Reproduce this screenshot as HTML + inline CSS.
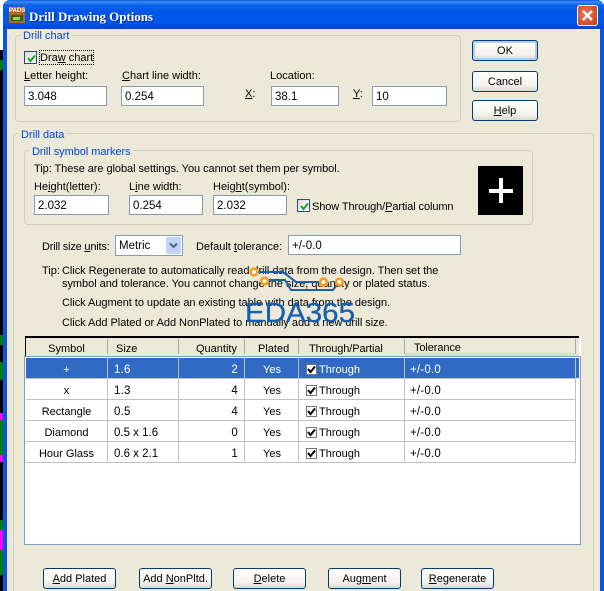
<!DOCTYPE html>
<html><head><meta charset="utf-8"><style>
html,body{margin:0;padding:0;background:#fff}
#r{position:relative;width:604px;height:591px;overflow:hidden;font:11px/13px "Liberation Sans",sans-serif;color:#000;background:#ece9d8}
#r div,#r span.t{position:absolute}
.t{white-space:nowrap}
.g{border:1px solid #d0d0bf;border-radius:4px;box-sizing:border-box}
.l{color:#0046d5;background:#ece9d8;padding:0 2px;white-space:nowrap}
.i{background:#fff;border:1px solid #7f9db9;box-sizing:border-box;height:20px;padding:4px 0 0 3px;font-size:11.5px;line-height:13px}
.b{border:1px solid #003c74;border-radius:3px;box-sizing:border-box;background:linear-gradient(#fff,#f4f3ee 70%,#dcd8c8);text-align:center;height:21px;line-height:21px;font-size:11px}
.c{background:linear-gradient(135deg,#dcdcd7,#fff);border:1px solid #1c5180;box-sizing:border-box;width:13px;height:13px}
.c svg{position:absolute;left:1px;top:1px}
.hl{background:#aca899;height:15px;width:1px;top:339px}
.h{top:343px;text-align:center;white-space:nowrap}
.v{background:#c0c0c0;width:1px;top:358px;height:105px}
.rl{background:#c0c0c0;height:1px;left:26px;width:550px}
.cell{white-space:nowrap;font-size:11px}
.n{letter-spacing:.2px;font-size:11.500px}
.tc{width:11px;height:11px;left:306px;border:1px solid #777;box-sizing:border-box;background:#fff}
.tc svg{position:absolute;left:0;top:0}
</style></head><body><div id="r">
<div style="left:0;top:0;width:604px;height:50px;background:#fff"></div>
<div style="left:0;top:50px;width:3px;height:541px;background:#000"></div>
<div style="left:0;top:60px;width:3px;height:10px;background:#008000"></div>
<div style="left:0;top:335px;width:3px;height:10px;background:#008000"></div>
<div style="left:0;top:362px;width:3px;height:18px;background:#008000"></div>
<div style="left:0;top:413px;width:3px;height:7px;background:#f0f"></div>
<div style="left:0;top:420px;width:3px;height:35px;background:#008000"></div>
<div style="left:0;top:455px;width:3px;height:7px;background:#f0f"></div>
<div style="left:0;top:520px;width:3px;height:10px;background:#008000"></div>
<div style="left:0;top:530px;width:3px;height:20px;background:#f0f"></div>
<div style="left:0;top:550px;width:3px;height:25px;background:#008000"></div>

<div style="left:3px;top:0;width:601px;height:591px;background:#0a55e0;border-radius:7px 7px 0 0"></div>
<div style="left:3px;top:0;width:601px;height:29px;border-radius:7px 7px 0 0;background:linear-gradient(#0a5be0 0,#3d8cf5 2px,#0a62e8 5px,#0055e5 12px,#0058ee 22px,#0048d0 28px)"></div>
<div style="left:7px;top:29px;width:593px;height:562px;background:#ece9d8"></div>

<div style="left:9px;top:7px;width:16px;height:16px;background:#b5651d"></div>
<div style="left:11px;top:15px;width:12px;height:6px;background:#2f5f1f"></div>
<div style="left:13px;top:17px;width:7px;height:3px;background:#9fd93a"></div>
<span class="t" style="left:9px;top:7px;width:16px;text-align:center;font:bold 6px/8px 'Liberation Sans',sans-serif;color:#fff">PADS</span>
<span class="t" style="left:29px;top:9px;font:bold 13px/15px 'Liberation Serif',serif;color:#fff;text-shadow:1px 1px 0 #0a2a90;letter-spacing:-.05px">Drill Drawing Options</span>
<div style="left:577px;top:5px;width:21px;height:21px;box-sizing:border-box;border:1px solid #fff;border-radius:3px;background:radial-gradient(circle at 40% 40%,#e8785a,#c83a18)"><svg width="19" height="19" style="position:absolute;left:0;top:0"><path d="M5 5L14 14M14 5L5 14" stroke="#fff" stroke-width="2.400"/></svg></div>

<!-- Drill chart -->
<div class="g" style="left:15px;top:35px;width:446px;height:87px"></div>
<span class="t l" style="left:21px;top:30px">Drill chart</span>
<div class="c" style="left:24px;top:51px"><svg width="11" height="11"><path d="M2 5L4.500 8L9 2.500" fill="none" stroke="#21a121" stroke-width="2"/></svg></div>
<div style="left:39px;top:50px;width:55px;height:15px;box-sizing:border-box;border:1px dotted #000"></div>
<span class="t" style="left:40px;top:52px">Dra<u>w</u> chart</span>
<span class="t" style="left:24px;top:70px"><u>L</u>etter height:</span>
<span class="t" style="left:122px;top:70px"><u>C</u>hart line width:</span>
<span class="t" style="left:270px;top:70px">Location:</span>
<span class="t" style="left:245px;top:88px"><u>X</u>:</span>
<span class="t" style="left:353px;top:88px"><u>Y</u>:</span>
<div class="i" style="left:24px;top:86px;width:83px">3.048</div>
<div class="i" style="left:121px;top:86px;width:83px">0.254</div>
<div class="i" style="left:271px;top:86px;width:68px">38.1</div>
<div class="i" style="left:372px;top:86px;width:75px">10</div>

<div class="b" style="left:472px;top:40px;width:66px;box-shadow:inset 0 0 0 2px #b5cdf0">OK</div>
<div class="b" style="left:472px;top:71px;width:66px">Cancel</div>
<div class="b" style="left:472px;top:100px;width:66px"><u>H</u>elp</div>

<!-- Drill data -->
<div class="g" style="left:13px;top:133px;width:581px;height:480px"></div>
<span class="t l" style="left:19px;top:129px">Drill data</span>
<div class="g" style="left:24px;top:150px;width:509px;height:75px"></div>
<span class="t l" style="left:30px;top:146px;letter-spacing:-.05px">Drill symbol markers</span>
<span class="t" style="left:34px;top:163px;letter-spacing:-.06px">Tip: These are global settings. You cannot set them per symbol.</span>
<span class="t" style="left:34px;top:181px">He<u>i</u>ght(letter):</span>
<span class="t" style="left:129px;top:181px">L<u>i</u>ne width:</span>
<span class="t" style="left:213px;top:181px">Heig<u>h</u>t(symbol):</span>
<div class="i" style="left:34px;top:195px;width:75px">2.032</div>
<div class="i" style="left:129px;top:195px;width:74px">0.254</div>
<div class="i" style="left:213px;top:195px;width:74px">2.032</div>
<div class="c" style="left:297px;top:199px"><svg width="11" height="11"><path d="M2 5L4.500 8L9 2.500" fill="none" stroke="#21a121" stroke-width="2"/></svg></div>
<span class="t" style="left:312px;top:201px;letter-spacing:-.1px">Show Through/<u>P</u>artial column</span>
<div style="left:478px;top:166px;width:45px;height:49px;background:#000"></div>
<div style="left:489px;top:189px;width:24px;height:4px;background:#fff"></div>
<div style="left:499px;top:178px;width:4px;height:25px;background:#fff"></div>

<span class="t" style="left:42px;top:241px;letter-spacing:-.2px">Drill size <u>u</u>nits:</span>
<div class="i" style="left:115px;top:235px;width:68px;height:21px;padding-top:4px">Metric</div>
<div style="left:166px;top:237px;width:15px;height:17px;background:#c1d3fb;border-radius:2px"><svg width="15" height="17"><path d="M4 6.500L7.500 10L11 6.500" fill="none" stroke="#4d6185" stroke-width="2"/></svg></div>
<span class="t" style="left:196px;top:241px">Default <u>t</u>olerance:</span>
<div class="i" style="left:288px;top:235px;width:173px">+/-0.0</div>

<span class="t" style="left:42px;top:265px">Tip:</span>
<span class="t" style="left:62px;top:265px;letter-spacing:-.04px">Click Regenerate to automatically read drill data from the design. Then set the</span>
<span class="t" style="left:62px;top:278px;letter-spacing:-.04px">symbol and tolerance. You cannot change the size, quantity or plated status.</span>
<span class="t" style="left:62px;top:297px;letter-spacing:-.04px">Click Augment to update an existing table with data from the design.</span>
<span class="t" style="left:62px;top:317px;letter-spacing:-.04px">Click Add Plated or Add NonPlated to manually add a new drill size.</span>

<!-- table -->
<div style="left:24px;top:356px;width:557px;height:189px;background:#fff;border:1px solid #7f9db9;box-sizing:border-box"></div>
<div style="left:25px;top:336px;width:554px;height:20px;background:#ece9d8;border-top:2px solid #000;border-left:1px solid #000;box-sizing:border-box"></div>
<div style="left:579px;top:336px;width:2px;height:20px;background:#fff"></div>
<div style="left:405px;top:353px;width:170px;height:3px;background:#dedbc9"></div>
<div class="hl" style="left:107px"></div><div class="hl" style="left:178px"></div><div class="hl" style="left:244px"></div><div class="hl" style="left:298px"></div><div class="hl" style="left:404px"></div><div class="hl" style="left:575px"></div>
<span class="t h" style="left:26px;width:81px">Symbol</span>
<span class="t h" style="left:116px">Size</span>
<span class="t h" style="left:196px">Quantity</span>
<span class="t h" style="left:258px">Plated</span>
<span class="t h" style="left:309px;letter-spacing:-.1px">Through/Partial</span>
<span class="t h" style="left:414px;top:342px;letter-spacing:-.1px">Tolerance</span>

<div style="left:26px;top:358px;width:553px;height:20px;background:#316ac5"></div>
<div class="rl" style="top:378px"></div><div class="rl" style="top:399px"></div><div class="rl" style="top:420px"></div><div class="rl" style="top:441px"></div><div class="rl" style="top:462px"></div>
<div class="v" style="left:107px"></div><div class="v" style="left:178px"></div><div class="v" style="left:244px"></div><div class="v" style="left:298px"></div><div class="v" style="left:404px"></div><div class="v" style="left:575px"></div>

<span class="t cell" style="left:26px;width:81px;text-align:center;top:364px;color:#fff">+</span>
<span class="t cell n" style="left:114px;top:364px;color:#fff">1.6</span>
<span class="t cell n" style="left:178px;width:60px;text-align:right;top:364px;color:#fff">2</span>
<span class="t cell" style="left:245px;width:54px;text-align:center;top:364px;color:#fff">Yes</span>
<span class="t cell" style="left:319px;top:364px;color:#fff">Through</span>
<span class="t cell n" style="left:410px;top:364px;color:#fff">+/-0.0</span>
<div class="tc" style="top:364px"><svg width="9" height="9"><path d="M1 4L3.500 7L8 1.500" fill="none" stroke="#000" stroke-width="2"/></svg></div>

<span class="t cell" style="left:26px;width:81px;text-align:center;top:385px">x</span>
<span class="t cell n" style="left:114px;top:385px">1.3</span>
<span class="t cell n" style="left:178px;width:60px;text-align:right;top:385px">4</span>
<span class="t cell" style="left:245px;width:54px;text-align:center;top:385px">Yes</span>
<span class="t cell" style="left:319px;top:385px">Through</span>
<span class="t cell n" style="left:410px;top:385px">+/-0.0</span>
<div class="tc" style="top:385px"><svg width="9" height="9"><path d="M1 4L3.500 7L8 1.500" fill="none" stroke="#000" stroke-width="2"/></svg></div>

<span class="t cell" style="left:26px;width:81px;text-align:center;top:406px">Rectangle</span>
<span class="t cell n" style="left:114px;top:406px">0.5</span>
<span class="t cell n" style="left:178px;width:60px;text-align:right;top:406px">4</span>
<span class="t cell" style="left:245px;width:54px;text-align:center;top:406px">Yes</span>
<span class="t cell" style="left:319px;top:406px">Through</span>
<span class="t cell n" style="left:410px;top:406px">+/-0.0</span>
<div class="tc" style="top:406px"><svg width="9" height="9"><path d="M1 4L3.500 7L8 1.500" fill="none" stroke="#000" stroke-width="2"/></svg></div>

<span class="t cell" style="left:26px;width:81px;text-align:center;top:427px">Diamond</span>
<span class="t cell n" style="left:114px;top:427px;letter-spacing:0">0.5 x 1.6</span>
<span class="t cell n" style="left:178px;width:60px;text-align:right;top:427px">0</span>
<span class="t cell" style="left:245px;width:54px;text-align:center;top:427px">Yes</span>
<span class="t cell" style="left:319px;top:427px">Through</span>
<span class="t cell n" style="left:410px;top:427px">+/-0.0</span>
<div class="tc" style="top:427px"><svg width="9" height="9"><path d="M1 4L3.500 7L8 1.500" fill="none" stroke="#000" stroke-width="2"/></svg></div>

<span class="t cell" style="left:26px;width:81px;text-align:center;top:448px">Hour Glass</span>
<span class="t cell n" style="left:114px;top:448px;letter-spacing:0">0.6 x 2.1</span>
<span class="t cell n" style="left:178px;width:60px;text-align:right;top:448px">1</span>
<span class="t cell" style="left:245px;width:54px;text-align:center;top:448px">Yes</span>
<span class="t cell" style="left:319px;top:448px">Through</span>
<span class="t cell n" style="left:410px;top:448px">+/-0.0</span>
<div class="tc" style="top:448px"><svg width="9" height="9"><path d="M1 4L3.500 7L8 1.500" fill="none" stroke="#000" stroke-width="2"/></svg></div>

<div class="b" style="left:43px;top:568px;width:73px"><u>A</u>dd Plated</div>
<div class="b" style="left:139px;top:568px;width:73px">Add <u>N</u>onPltd.</div>
<div class="b" style="left:233px;top:568px;width:73px"><u>D</u>elete</div>
<div class="b" style="left:328px;top:568px;width:73px">Aug<u>m</u>ent</div>
<div class="b" style="left:421px;top:568px;width:73px"><u>R</u>egenerate</div>

<!-- watermark -->
<svg width="604" height="591" style="position:absolute;left:0;top:0">
<path d="M254 272H283L296 282H324M265 280H285L291 290H333L339 282" fill="none" stroke="#1560ae" stroke-width="2"/>
<circle cx="254" cy="272" r="3.300" fill="#fff" stroke="#f5a02c" stroke-width="2.800"/>
<circle cx="264.500" cy="281" r="3.300" fill="#fff" stroke="#f5a02c" stroke-width="2.800"/>
<circle cx="323.500" cy="282" r="3.300" fill="#fff" stroke="#f5a02c" stroke-width="2.800"/>
<circle cx="339.500" cy="282" r="3.300" fill="#fff" stroke="#f5a02c" stroke-width="2.800"/>
<text x="245" y="322" font-family="Liberation Sans, sans-serif" font-size="28" fill="#1560ae" stroke="#1560ae" stroke-width=".3" textLength="110" lengthAdjust="spacingAndGlyphs">EDA365</text>
</svg>
</div></body></html>
